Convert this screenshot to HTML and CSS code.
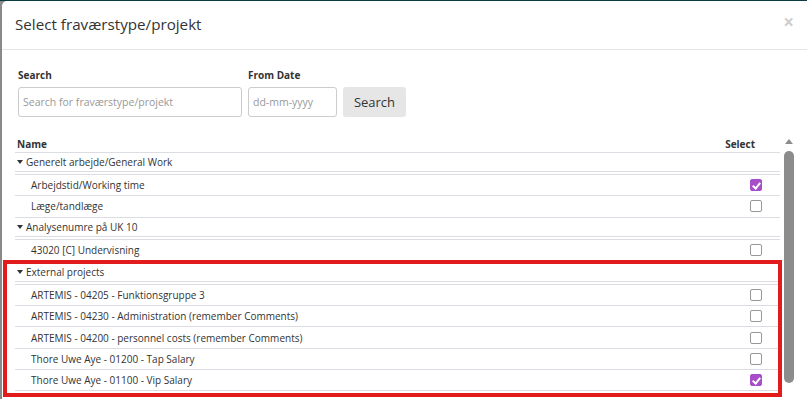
FILE: index.html
```html
<!DOCTYPE html>
<html>
<head>
    <title>Select fraværstype/projekt</title>
    <link rel="stylesheet" href="styles.css">
</head>
<body>
    <div class="modal">
        <div class="modal-header">
            <h4>Select fraværstype/projekt</h4>
            <span class="close">&times;</span>
        </div>

        <div class="filters">
            <div class="field">
                <label>Search</label>
                <input type="text" class="search-input" placeholder="Search for fraværstype/projekt">
            </div>
            <div class="field">
                <label>From Date</label>
                <input type="text" class="date-input" placeholder="dd-mm-yyyy">
            </div>
            <button class="btn">Search</button>
        </div>

        <div class="grid-wrap">
            <div class="grid">
                <div class="grid-head">
                    <span>Name</span>
                    <span class="col-select">Select</span>
                </div>

                <div class="group">
                    <div class="group-row"><span class="caret"></span>Generelt arbejde/General Work</div>
                    <div class="children">
                        <div class="row"><span>Arbejdstid/Working time</span><span class="check on"></span></div>
                        <div class="row"><span>Læge/tandlæge</span><span class="check"></span></div>
                    </div>
                </div>

                <div class="group">
                    <div class="group-row"><span class="caret"></span>Analysenumre på UK 10</div>
                    <div class="children">
                        <div class="row"><span>43020 [C] Undervisning</span><span class="check"></span></div>
                    </div>
                </div>

                <div class="group marked">
                    <div class="group-row"><span class="caret"></span>External projects</div>
                    <div class="children">
                        <div class="row"><span>ARTEMIS - 04205 - Funktionsgruppe 3</span><span class="check"></span></div>
                        <div class="row"><span>ARTEMIS - 04230 - Administration (remember Comments)</span><span class="check"></span></div>
                        <div class="row"><span>ARTEMIS - 04200 - personnel costs (remember Comments)</span><span class="check"></span></div>
                        <div class="row"><span>Thore Uwe Aye - 01200 - Tap Salary</span><span class="check"></span></div>
                        <div class="row"><span>Thore Uwe Aye - 01100 - Vip Salary</span><span class="check on"></span></div>
                    </div>
                    <div class="highlight"></div>
                </div>
            </div>

            <div class="scrollbar">
                <span class="arrow"></span>
                <span class="thumb"></span>
            </div>
        </div>
    </div>
</body>
</html>
```

FILE: styles.css
```css
html, body { height: 100%; }
body {
    margin: 0;
    padding: 0 0 0 2px;
    box-sizing: border-box;
    background-color: #8a8a8a;
    border-top: 1px solid #0c3a3e;
    font-family: 'Open Sans', sans-serif;
    color: #333;
    overflow: hidden;
}
.modal {
    background: #fff;
    height: 100%;
    border-radius: 5px 0 0 0;
}
.modal-header {
    height: 48px;
    border-bottom: 1px solid #e5e5e5;
    display: flex;
    align-items: center;
    justify-content: space-between;
    padding: 0 13px 0 13px;
}
.modal-header h4 {
    margin: 0;
    font-size: 15.2px;
    font-weight: normal;
    padding-bottom: 2px;
}
.close {
    font-size: 19px;
    font-weight: bold;
    color: #cfcfcf;
    line-height: 1;
    padding-bottom: 6px;
}

.filters {
    display: flex;
    align-items: flex-end;
    gap: 6px;
    padding: 18px 0 0 16px;
}
.field { display: flex; flex-direction: column; }
.field label {
    font-size: 10px;
    font-weight: bold;
    line-height: 14px;
    margin-bottom: 5px;
}
input {
    height: 30px;
    box-sizing: border-box;
    border: 1px solid #ccc;
    border-radius: 3px;
    padding: 0 4px;
    font-family: 'Open Sans', sans-serif;
    font-size: 10.5px;
    color: #333;
}
input::placeholder { color: #999; }
.search-input { width: 224px; }
.date-input { width: 89px; }
.btn {
    height: 30px;
    width: 63px;
    border: none;
    border-radius: 3px;
    background: #e6e6e6;
    color: #333;
    font-family: 'Open Sans', sans-serif;
    font-size: 13px;
}

.grid-wrap {
    display: flex;
    margin: 19px 13px 0 13px;
}
.grid { flex: 1; }
.grid-head {
    display: flex;
    justify-content: space-between;
    font-size: 10px;
    font-weight: bold;
    height: 16px;
    line-height: 16px;
    padding: 0 0 0 2px;
    border-bottom: 1px solid #dcdde3;
}
.col-select { padding-right: 25px; }

.group-row {
    font-size: 10px;
    height: 18px;
    line-height: 18px;
    padding-left: 2px;
    border-bottom: 1px solid #dcdde3;
    display: flex;
    align-items: center;
}
.caret {
    width: 0;
    height: 0;
    border-left: 3px solid transparent;
    border-right: 3px solid transparent;
    border-top: 4px solid #333;
    margin: 0 3px 0 0;
}
.children {
    margin-top: 2px;
    border-top: 1px solid #dcdde3;
}
.row {
    font-size: 10px;
    height: 20.3px;
    display: flex;
    align-items: center;
    justify-content: space-between;
    padding: 0 18px 0 16px;
    border-bottom: 1px solid #dcdde3;
}
.check {
    width: 12px;
    height: 12px;
    box-sizing: border-box;
    border: 1px solid #999;
    border-radius: 2px;
    position: relative;
}
.check.on {
    background: #a74fc8;
    border-color: #a74fc8;
}
.check.on::after {
    content: "";
    position: absolute;
    left: 3px;
    top: 1px;
    width: 3px;
    height: 6px;
    border: solid #fff;
    border-width: 0 2px 2px 0;
    transform: rotate(40deg);
}

.marked {
    position: relative;
    padding-top: 2px;
}
.highlight {
    position: absolute;
    left: -12px;
    right: -2px;
    top: -1px;
    bottom: -6px;
    border: 4px solid #e21c1c;
}

.scrollbar {
    width: 10px;
    margin-left: 4px;
    padding-top: 3px;
    display: flex;
    flex-direction: column;
    align-items: center;
}
.arrow {
    width: 0;
    height: 0;
    border-left: 4px solid transparent;
    border-right: 4px solid transparent;
    border-bottom: 5px solid #8c8c8c;
}
.thumb {
    width: 10px;
    height: 232px;
    margin-top: 7px;
    background: #8c8c8c;
    border-radius: 5px;
}
```
